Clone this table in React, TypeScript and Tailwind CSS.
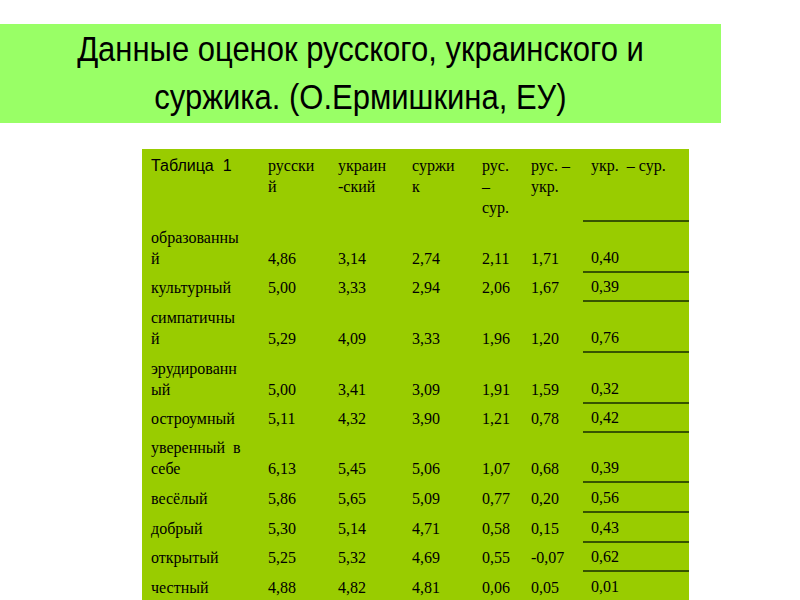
const rows: { label: string[]; values: string[]; h: string }[] = [
  { label: ["образованны", "й"], values: ["4,86", "3,14", "2,74", "2,11", "1,71", "0,40"], h: "h-[51px]" },
  { label: ["культурный"], values: ["5,00", "3,33", "2,94", "2,06", "1,67", "0,39"], h: "h-[29px]" },
  { label: ["симпатичны", "й"], values: ["5,29", "4,09", "3,33", "1,96", "1,20", "0,76"], h: "h-[51px]" },
  { label: ["эрудированн", "ый"], values: ["5,00", "3,41", "3,09", "1,91", "1,59", "0,32"], h: "h-[51px]" },
  { label: ["остроумный"], values: ["5,11", "4,32", "3,90", "1,21", "0,78", "0,42"], h: "h-[29px]" },
  { label: ["уверенный\u00a0\u00a0в", "себе"], values: ["6,13", "5,45", "5,06", "1,07", "0,68", "0,39"], h: "h-[50px]" },
  { label: ["весёлый"], values: ["5,86", "5,65", "5,09", "0,77", "0,20", "0,56"], h: "h-[30px]" },
  { label: ["добрый"], values: ["5,30", "5,14", "4,71", "0,58", "0,15", "0,43"], h: "h-[30px]" },
  { label: ["открытый"], values: ["5,25", "5,32", "4,69", "0,55", "-0,07", "0,62"], h: "h-[29px]" },
  { label: ["честный"], values: ["4,88", "4,82", "4,81", "0,06", "0,05", "0,01"], h: "h-[30px]" },
];

const headers: string[][] = [
  ["русски", "й"],
  ["украин", "-ский"],
  ["суржи", "к"],
  ["рус.", "–", "сур."],
  ["рус. –", "укр."],
];

function Lines({ lines }: { lines: string[] }) {
  return (
    <>
      {lines.map((l, i) => (
        <span key={i} className="block">
          {l}
        </span>
      ))}
    </>
  );
}

export default function App() {
  return (
    <div className="h-[600px] w-[800px] overflow-hidden bg-white text-black">
      {/* Title banner */}
      <div className="mt-[24px] flex h-[99px] w-[721px] flex-col items-center justify-center bg-[#99ff66] font-['Liberation_Sans',Arial,sans-serif] text-[31px] leading-[48px]">
        <span className="inline-block scale-y-[1.12]">Данные оценок русского, украинского и</span>
        <span className="inline-block scale-y-[1.12]">суржика. (О.Ермишкина, ЕУ)</span>
      </div>

      {/* Table */}
      <div className="ml-[142px] mt-[26px] w-[547px] bg-[#99cc00] pb-[40px]">
        <table className="w-[547px] table-fixed border-collapse font-['Liberation_Serif','Times_New_Roman',serif] text-[16px] leading-[21px]">
          <colgroup>
            <col className="w-[118px]" />
            <col className="w-[70px]" />
            <col className="w-[74px]" />
            <col className="w-[70px]" />
            <col className="w-[49px]" />
            <col className="w-[60px]" />
            <col className="w-[106px]" />
          </colgroup>
          <thead>
            <tr className="h-[72px]">
              <th className="p-0 pl-[9px] pt-[6px] text-left align-top font-['Liberation_Sans',Arial,sans-serif] font-normal">
                Таблица&nbsp;&nbsp;1
              </th>
              {headers.map((h, i) => (
                <th key={i} className="p-0 pl-2 pt-[6px] text-left align-top font-normal">
                  <Lines lines={h} />
                </th>
              ))}
              <th className="border-b-2 border-[#375400] p-0 pl-2 pt-[6px] text-left align-top font-normal">
                укр.&nbsp; – сур.
              </th>
            </tr>
          </thead>
          <tbody>
            {rows.map((r, i) => (
              <tr key={i} className={r.h}>
                <td className="p-0 pb-[3px] pl-[9px] align-bottom">
                  <Lines lines={r.label} />
                </td>
                {r.values.map((v, j) => (
                  <td
                    key={j}
                    className={
                      j === 5
                        ? "border-b-2 border-[#375400] p-0 pb-[3px] pl-2 align-bottom"
                        : "p-0 pb-[3px] pl-2 align-bottom"
                    }
                  >
                    {v}
                  </td>
                ))}
              </tr>
            ))}
          </tbody>
        </table>
      </div>
    </div>
  );
}
